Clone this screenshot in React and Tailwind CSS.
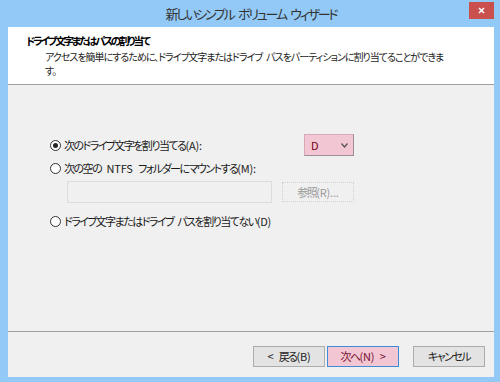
import React from "react";

const jp = "font-['Noto_Sans_CJK_JP','Noto_Sans',sans-serif] [font-feature-settings:'palt']";

// Latin bits keep their own spacing; kana are squeezed
function L({ children }) {
  return <span className="tracking-[-0.2px]">{children}</span>;
}

function Radio({ checked }) {
  return (
    <span className="relative flex h-[11px] w-[11px] shrink-0 items-center justify-center rounded-full border border-[#333] bg-white">
      {checked && <span className="h-[5px] w-[5px] rounded-full bg-[#222]" />}
    </span>
  );
}

export default function App() {
  return (
    <div className={`flex h-[382px] w-[500px] flex-col bg-[#92c9f6] pb-[5px] pl-[8px] pr-[6px] text-[11px] leading-none tracking-[-1.5px] text-[#1a1a1a] ${jp}`}>
      {/* title bar */}
      <div className="relative flex h-[27px] shrink-0 items-center justify-center">
        <span className="text-[13px] tracking-[-2.2px] text-[#333]">新しいシンプル{"\u2002"}ボリューム{"\u2002"}ウィザード</span>
        <div className="absolute right-0 top-[2px] flex h-[17px] w-[25px] items-center justify-center bg-[#c9504c]">
          <svg width="7" height="7" viewBox="0 0 7 7">
            <path d="M1 1 L6 6 M6 1 L1 6" stroke="white" strokeWidth="1.6" />
          </svg>
        </div>
      </div>

      <div className="flex flex-1 flex-col bg-[#f0f0f0]">
        {/* header */}
        <div className="h-[58px] shrink-0 border-b border-[#a0a0a0] bg-white pl-[18px] pt-[9px]">
          <div className="text-[10.5px] font-bold tracking-[-2.2px] text-black">ドライブ文字またはパスの割り当て</div>
          <div className="mt-[3px] w-[422px] pl-[19px] text-[10px] leading-[14px] tracking-[-1px] text-[#222]">
            {"アクセスを簡単にするために、ドライブ文字またはドライブ\u2002パスをパーティションに割り当てることができます。"}
          </div>
        </div>

        {/* body */}
        <div className="flex flex-1 flex-col pl-[42px] pt-[49px]">
          <div className="flex w-[304px] items-center justify-between">
            <div className="flex items-center gap-[3px]">
              <Radio checked />
              <span>次のドライブ文字を割り当てる<L>(A):</L></span>
            </div>
            <div className="flex h-[22px] w-[50px] items-center justify-between border border-[#d9a7b6] border-b-[#9a8f93] border-r-[#9a8f93] bg-[#f3c6d3] pl-[6px] pr-[5px]">
              <span className="text-[#7a0010]">D</span>
              <svg width="7" height="5" viewBox="0 0 7 5">
                <path d="M0.5 0.5 L3.5 4 L6.5 0.5" fill="none" stroke="#555" strokeWidth="1.2" />
              </svg>
            </div>
          </div>

          <div className="mt-[7px] flex items-center gap-[3px]">
            <Radio />
            <span>次の空の<L>{"\u2002"}NTFS{"\u2002"}</L>フォルダーにマウントする<L>(M):</L></span>
          </div>

          <div className="mt-[7px] flex w-[304px] items-center justify-between pl-[17px]">
            <div className="h-[22px] w-[205px] border border-[#dcdcdc]" />
            <div className="flex h-[20px] w-[72px] items-center justify-center border border-dotted border-[#cfcfcf] text-[#9a9a9a]">
              参照<L>(R)...</L>
            </div>
          </div>

          <div className="mt-[13px] flex items-center gap-[3px]">
            <Radio />
            <span>ドライブ文字またはドライブ{"\u2002"}パスを割り当てない<L>(D)</L></span>
          </div>
        </div>

        {/* footer */}
        <div className="h-[46px] shrink-0 border-t border-[#a0a0a0]">
          <div className="flex justify-end gap-[2px] pr-[9px] pt-[14px]">
            <div className="flex h-[21px] w-[72px] items-center justify-center border border-[#acacac] bg-[#e3e3e3] text-[#222]">
              <L>&lt;{"\u2002"}</L>戻る<L>(B)</L>
            </div>
            <div className="flex h-[21px] w-[72px] items-center justify-center border border-[#3c8ad8] bg-[#f2c6d3] text-[#7a1030]">
              次へ<L>(N){"\u2002"}&gt;</L>
            </div>
            <div className="ml-[12px] flex h-[21px] w-[72px] items-center justify-center border border-[#acacac] bg-[#e3e3e3] text-[#222]">
              キャンセル
            </div>
          </div>
        </div>
      </div>
    </div>
  );
}
